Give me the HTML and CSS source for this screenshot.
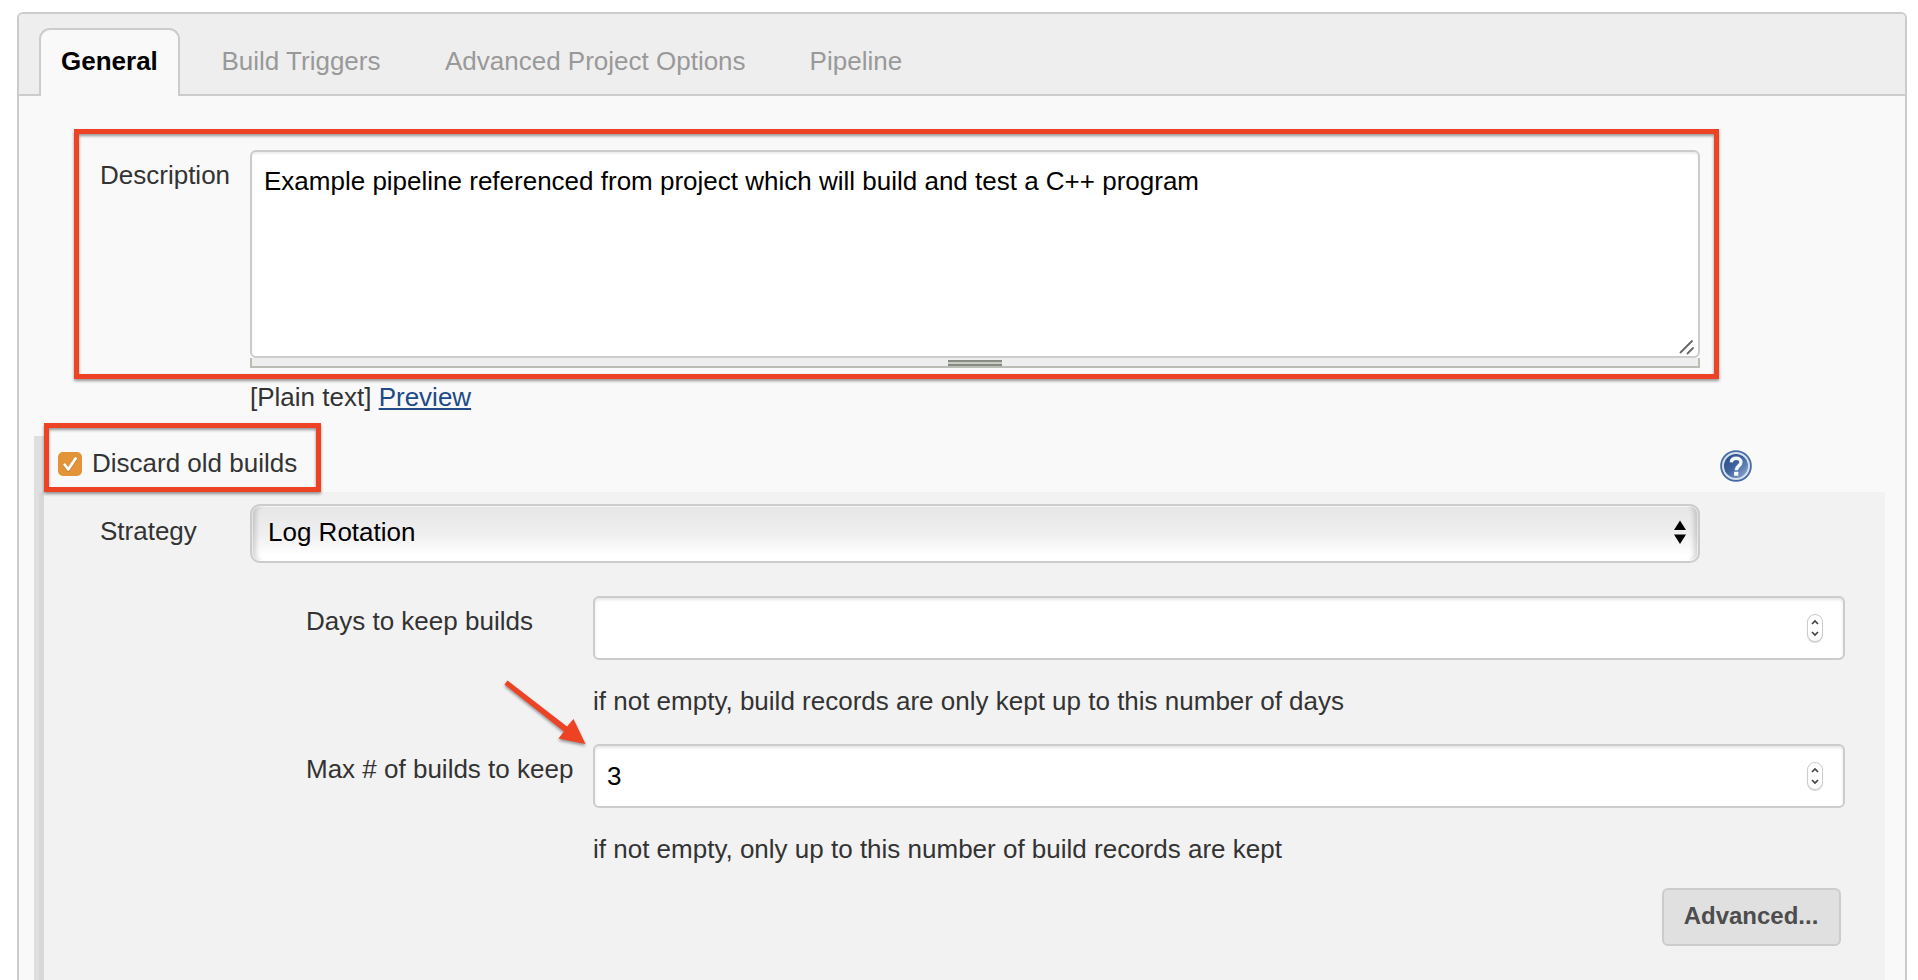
FILE: index.html
```
<!DOCTYPE html>
<html lang="en">
<head>
<meta charset="utf-8">
<title>Pipeline configuration</title>
<link rel="stylesheet" href="styles.css">
</head>
<body>
<main class="panel">
  <nav class="tabs">
    <a class="tab active"><span>General</span></a>
    <a class="tab triggers">Build Triggers</a>
    <a class="tab options">Advanced Project Options</a>
    <a class="tab pipeline">Pipeline</a>
  </nav>
  <section class="description">
    <label class="label">Description</label>
    <div class="editor">
      <div class="textarea"><span>Example pipeline referenced from project which will build and test a C++ program</span>
        <svg class="resizer" width="16" height="16" viewBox="0 0 16 16"><path d="M1.5 13.5 13 2M8.500 14.500 14 9" stroke="#666" stroke-width="1.8" stroke-linecap="round" fill="none"/></svg>
      </div>
      <div class="handle"><i class="grip"></i></div>
      <div class="markup"><span class="plain">[Plain text]</span> <a class="preview">Preview</a></div>
    </div>
    <div class="highlight highlight-description"></div>
  </section>
  <section class="discard">
    <div class="discard-head">
      <span class="check"><svg width="24" height="24" viewBox="0 0 24 24"><path d="M6.700 12.800 10.300 17.500 17.600 6.500" fill="none" stroke="#fff" stroke-width="2.700" stroke-linecap="round" stroke-linejoin="round"/></svg></span>
      <span class="discard-label">Discard old builds</span>
      <svg class="help" width="32" height="32" viewBox="0 0 32 32">
        <defs><linearGradient id="blue" x1="0" y1="0" x2="1" y2="1"><stop offset="0.1" stop-color="#2c4f8b"/><stop offset="0.450" stop-color="#3d619d"/><stop offset="1" stop-color="#9bb5da"/></linearGradient></defs>
        <circle cx="16" cy="16" r="15.800" fill="#456aa5"/>
        <circle cx="16" cy="16" r="13" fill="url(#blue)" stroke="#d5deeb" stroke-width="2"/>
        <path d="M11.300 12.400C11.500 9.700 13.300 8.300 16.100 8.300c2.900 0 4.900 1.500 4.900 3.800 0 3.900-4.700 3.700-4.700 8.100" fill="none" stroke="#f2f5fa" stroke-width="3.400"/>
        <rect x="14.100" y="21.800" width="4.200" height="4" rx=".5" fill="#fff"/>
      </svg>
      <div class="highlight highlight-discard"></div>
    </div>
    <div class="discard-body">
      <div class="row strategy">
        <label class="label">Strategy</label>
        <div class="select"><span>Log Rotation</span>
          <svg width="12" height="24" viewBox="0 0 12 24"><path d="M6 .5 12 10H0ZM0 14.500h12L6 24Z" fill="#000"/></svg>
        </div>
      </div>
      <div class="row days">
        <label class="sublabel days-label">Days to keep builds</label>
        <div class="field">
          <div class="number"><span></span><span class="spinner"><svg width="8" height="18" viewBox="0 0 8 18"><path d="M1 5 4 2 7 5M1 13 4 16 7 13" fill="none" stroke="#444" stroke-width="1.700"/></svg></span></div>
          <p class="hint hint-days">if not empty, build records are only kept up to this number of days</p>
        </div>
      </div>
      <div class="row max">
        <label class="sublabel max-label">Max # of builds to keep</label>
        <div class="field">
          <div class="number"><span>3</span><span class="spinner"><svg width="8" height="18" viewBox="0 0 8 18"><path d="M1 5 4 2 7 5M1 13 4 16 7 13" fill="none" stroke="#444" stroke-width="1.700"/></svg></span></div>
          <p class="hint hint-max">if not empty, only up to this number of build records are kept</p>
        </div>
        <svg class="arrow" width="90" height="75" viewBox="0 0 90 75"><path d="M4.500 9.500 7.500 5.500 67 51.500 73.500 44 85.500 69 58.500 63.500 64 56.500Z" fill="#ee4225"/></svg>
      </div>
      <div class="actions"><button class="advanced" type="button">Advanced...</button></div>
    </div>
  </section>
</main>
</body>
</html>
```
FILE: styles.css
```
* { box-sizing: border-box; }
html { height: 980px; overflow: hidden; }
body {
  margin: 0;
  height: 980px;
  padding: 12px 11px 0 17px;
  overflow: hidden;
  background: #fff;
  color: #333;
  font: 26px/30px "Liberation Sans", Arial, sans-serif;
}
.panel {
  height: 968px;
  overflow: hidden;
  border: 2px solid #ccc;
  border-bottom: 0;
  border-radius: 6px 6px 0 0;
  background: #f9f9f9;
}
.tabs {
  display: flex;
  height: 82px;
  padding: 14px 0 0 20px;
  border-bottom: 2px solid #ccc;
  background: #eee;
}
.tab { padding-top: 18px; margin-right: 64px; color: #999; white-space: nowrap; }
.tab.active {
  width: 141px;
  height: 68px;
  margin-right: 42px;
  padding: 16px 0 0 20px;
  border: 2px solid #ccc;
  border-bottom: 0;
  border-radius: 11px 11px 0 0;
  background: #f9f9f9;
  color: #000;
  font-weight: bold;
}
.triggers { margin-left: -.5px; margin-right: 64.5px; }
.description { position: relative; display: flex; height: 340px; padding: 54px 0 0 81px; }
.label { flex: none; width: 150px; padding-top: 10px; }
.editor { width: 1450px; }
.textarea {
  position: relative;
  height: 208px;
  padding: 14px 12px;
  border: 2px solid #ccc;
  border-radius: 6px;
  background: #fff;
  box-shadow: inset 0 2px 2px rgba(0, 0, 0, .07);
  color: #000;
  white-space: nowrap;
}
.resizer { position: absolute; right: 3px; bottom: 1px; }
.handle {
  display: flex;
  justify-content: center;
  height: 10px;
  padding-top: 2px;
  border: solid #bbbcb5;
  border-width: 0 2px 2px;
  background: #eee;
}
.grip { width: 54px; height: 6px; border: solid #888b82; border-width: 2px 0; background: #c8cbc5; }
.markup { padding-top: 14px; }
.preview { color: #204a87; text-decoration: underline; text-decoration-thickness: 2px; text-underline-offset: 2px; }
.highlight { position: absolute; border: 5px solid #ee4225; filter: drop-shadow(0 2px 1.500px rgba(0, 0, 0, .4)); }
.highlight-description { left: 55px; top: 33px; width: 1645px; height: 250px; }
.highlight-discard { left: 5px; top: -13px; width: 277px; height: 69px; }
.discard { width: 1851px; margin-left: 15px; }
.discard-head {
  position: relative;
  display: flex;
  height: 56px;
  padding: 12px 0 0 19px;
  border-left: 5px solid #dfdfdf;
  box-shadow: inset 5px 0 #dfdfdf;
}
.check { width: 24px; height: 24px; margin-top: 4px; border-radius: 5px; background: #e39439; }
.check svg { display: block; filter: drop-shadow(0 1px 0 rgba(0, 0, 0, .2)); }
.discard-label { width: 220px; margin-left: 10px; white-space: nowrap; }
.help { margin: 2px 0 0 1408px; flex: none; }
.discard-body { height: 500px; border-left: 5px solid #dfdfdf; background: #f2f2f2; box-shadow: inset 5px 0 #d8d8d8; padding: 12px 0 0 61px; }
.row { position: relative; display: flex; }
.strategy { height: 92px; }
.strategy .label { padding-top: 12px; }
.select {
  display: flex;
  align-items: center;
  justify-content: space-between;
  width: 1450px;
  height: 59px;
  padding: 0 12px 3px 16px;
  border: 2px solid #ccc;
  border-radius: 10px;
  background: linear-gradient(#e6e6e6, #efefef 50%, #fff 90%);
  box-shadow: inset 0 0 0 1px rgba(255, 255, 255, .5), inset 9px 0 5px -5px rgba(0, 0, 0, .16), inset -9px 0 5px -5px rgba(0, 0, 0, .16);
  color: #000;
}
.days, .max { height: 148px; }
.sublabel { flex: none; width: 287px; margin-left: 206px; padding-top: 10px; white-space: nowrap; }
.field { width: 1252px; }
.number {
  display: flex;
  align-items: center;
  justify-content: space-between;
  height: 64px;
  padding: 0 20px 0 12px;
  border: 2px solid #ccc;
  border-radius: 6px;
  background: #fff;
  box-shadow: inset 0 2px 3px rgba(0, 0, 0, .1);
  color: #000;
}
.spinner { display: flex; align-items: center; justify-content: center; width: 16px; height: 28px; border: 1px solid #ccc; border-radius: 8px; background: #fff; box-shadow: 0 1px 1px rgba(0, 0, 0, .15); }
.hint { margin: 26px 0 0; white-space: nowrap; }
.arrow { position: absolute; left: 400px; top: -69px; filter: drop-shadow(0 2px 1.500px rgba(0, 0, 0, .4)); }
.actions { display: flex; justify-content: flex-end; padding-right: 44px; margin-top: -4px; }
.advanced {
  width: 179px;
  height: 58px;
  padding: 0 1px 2px 0;
  border: 2px solid #ccc;
  border-radius: 6px;
  background: #e0e0e0;
  color: #4d4d4d;
  font: bold 24px/30px "Liberation Sans", Arial, sans-serif;
}
```
